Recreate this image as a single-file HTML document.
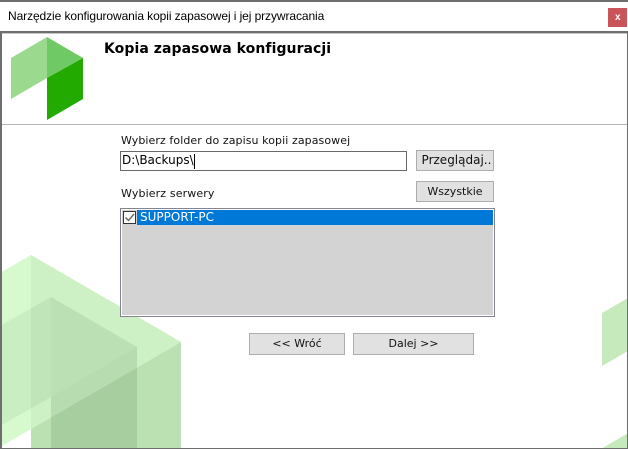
<!DOCTYPE html>
<html lang="pl"><head><meta charset="utf-8"><title>Narzędzie</title>
<style>
html,body{margin:0;padding:0;background:#fff;width:628px;height:449px;overflow:hidden}
#w{position:relative;width:628px;height:449px;overflow:hidden;background:#fff;font-family:"DejaVu Sans","Liberation Sans",sans-serif;font-size:11px;color:#111}
#w div,#w span{position:absolute;box-sizing:border-box;white-space:nowrap}
svg{position:absolute;left:0;top:0;display:block}
.btn{background:#e1e1e1;border:1px solid #adadad;text-align:center;color:#111}
</style></head><body>
<div id="w">
<svg width="628" height="449" viewBox="0 0 628 449">
  <rect x="0" y="0" width="628" height="2" fill="#6e6e6e"/>
  <g>
    <polygon points="31,255 0,273 0,447 31,429" fill="#d6f9ce"/>
    <polygon points="31,255 181,342 31,429" fill="#cdf0c5"/>
    <polygon points="31,429 181,342 181,449 31,449" fill="#bbe0b2"/>
    <polygon points="51,297 0,326 0,426 51,397" fill="#003c00" fill-opacity=".06"/>
    <polygon points="51,297 137,347 51,397" fill="#003c00" fill-opacity=".088"/>
    <polygon points="51,397 137,347 137,449 51,449" fill="#003c00" fill-opacity=".107"/>
  </g>
  <polygon points="602,313 628,298 628,351 602,366" fill="#c6eabc"/>
  <polygon points="601,449 628,433 628,449" fill="#c6eabc"/>
  <polygon points="11,58 47,37 47,78 11,99" fill="#9bd98f"/>
  <polygon points="47,37 83,58 47,78" fill="#6fc964"/>
  <polygon points="47,78 83,58 83,99 47,120" fill="#22aa00"/>
  <rect x="2" y="124" width="625" height="1" fill="#b4b4b4"/>
  <rect x="0" y="31" width="628" height="2" fill="#6e6e6e"/>
  <rect x="2" y="33" width="625" height="1" fill="#c8c8c8"/>
  <rect x="0" y="31" width="2" height="418" fill="#6e6e6e"/>
  <rect x="627" y="31" width="1" height="418" fill="#6e6e6e"/>
  <rect x="0" y="448" width="628" height="1" fill="#6e6e6e"/>
</svg>

<span style="left:8px;top:9px;font:12px/14px 'Liberation Sans',sans-serif;letter-spacing:-.09px;color:#000">Narzędzie konfigurowania kopii zapasowej i jej przywracania</span>
<div style="left:608px;top:8px;width:19px;height:19px;background:#c9555a"></div>
<span style="left:615px;top:11px;font:bold 10px/14px 'Liberation Sans',sans-serif;color:#fff">x</span>

<span style="left:104px;top:41px;font:bold 14px/17px 'DejaVu Sans',sans-serif;letter-spacing:.07px;color:#000">Kopia zapasowa konfiguracji</span>

<span style="left:121px;top:134px;line-height:14px;letter-spacing:.08px">Wybierz folder do zapisu kopii zapasowej</span>
<div style="left:120px;top:151px;width:287px;height:20px;background:#fff;border:1px solid #6a6a6a"></div>
<span style="left:122px;top:153px;font-size:12px;line-height:15px;color:#000">D:\Backups\</span>
<div style="left:194px;top:154px;width:1px;height:15px;background:#000"></div>
<div class="btn" style="left:416px;top:150px;width:78px;height:21px;line-height:19px;font-size:12px;padding-left:3px">Przeglądaj..</div>

<span style="left:121px;top:187px;line-height:14px;letter-spacing:.13px">Wybierz serwery</span>
<div class="btn" style="left:416px;top:181px;width:78px;height:21px;line-height:19px">Wszystkie</div>

<div style="left:120px;top:208px;width:375px;height:109px;background:#d3d3d3;border:1px solid #84848e;box-shadow:inset 0 0 0 1px #fff"></div>
<div style="left:137px;top:210px;width:356px;height:15px;background:#0078d7"></div>
<div style="left:123px;top:211px;width:13px;height:13px;background:#fff;border:1px solid #333"></div>
<svg width="628" height="449"><path d="M125.5 217.5 L128.5 220.5 L134 214" fill="none" stroke="#666" stroke-width="1.4"/></svg>
<span style="left:140px;top:210px;font-size:12px;line-height:15px;color:#fff">SUPPORT-PC</span>

<div class="btn" style="left:249px;top:333px;width:96px;height:22px;line-height:20px">&lt;&lt; Wróć</div>
<div class="btn" style="left:353px;top:333px;width:121px;height:22px;line-height:20px">Dalej &gt;&gt;</div>
</div>
</body></html>
